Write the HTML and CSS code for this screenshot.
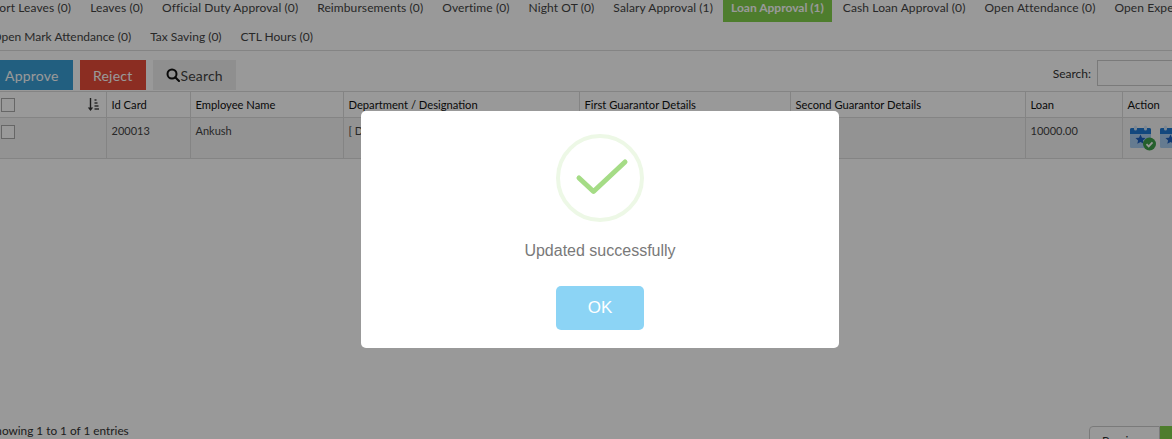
FILE: index.html
```html
<!DOCTYPE html>
<html lang="en">
	<head>
		<meta charset="UTF-8" />
		<meta name="viewport" content="width=device-width, initial-scale=1.0" />
		<title>Loan Approval</title>
		<link rel="stylesheet" href="styles.css">
	</head>
	<body>
		<div id="page">
			<ul class="tabs">
				<li class="first"><a>Short Leaves (0)</a></li>
				<li><a>Leaves (0)</a></li>
				<li><a>Official Duty Approval (0)</a></li>
				<li><a>Reimbursements (0)</a></li>
				<li><a>Overtime (0)</a></li>
				<li><a>Night OT (0)</a></li>
				<li><a>Salary Approval (1)</a></li>
				<li class="active"><a>Loan Approval (1)</a></li>
				<li><a>Cash Loan Approval (0)</a></li>
				<li><a>Open Attendance (0)</a></li>
				<li><a>Open Expense Approval (0)</a></li>
				<li class="second-row"><a>Open Mark Attendance (0)</a></li>
				<li class="second-row"><a>Tax Saving (0)</a></li>
				<li class="second-row"><a>CTL Hours (0)</a></li>
			</ul>

			<div class="toolbar">
				<button class="btn btn-approve">Approve</button>
				<button class="btn btn-reject">Reject</button>
				<button class="btn btn-search">
					<svg width="14" height="14" viewBox="0 0 14 14" fill="none" stroke="#111" stroke-width="2">
						<circle cx="6" cy="6" r="4.5" />
						<path d="M9.2 9.2 13 13" stroke-linecap="round" />
					</svg>Search
				</button>
				<label class="filter">Search: <input type="text" /></label>
			</div>

			<table class="grid">
				<colgroup>
					<col class="c-check" />
					<col class="c-id" />
					<col class="c-name" />
					<col class="c-dept" />
					<col class="c-first" />
					<col class="c-second" />
					<col class="c-loan" />
					<col class="c-action" />
				</colgroup>
				<thead>
					<tr>
						<th>
							<div class="check-head">
								<span class="box"></span>
								<svg width="12" height="13" viewBox="0 0 12 13">
									<path d="M2.800 0h1.400v9.500h2L3.500 13 .8 9.500h2z" fill="#333" />
									<g fill="#777">
										<rect x="7.500" y="1" width="2" height="2" />
										<rect x="7.500" y="4" width="3" height="2" />
										<rect x="7.500" y="7" width="4" height="2" />
										<rect x="7.500" y="10" width="4.500" height="2" />
									</g>
								</svg>
							</div>
						</th>
						<th>Id Card</th>
						<th>Employee Name</th>
						<th>Department / Designation</th>
						<th>First Guarantor Details</th>
						<th>Second Guarantor Details</th>
						<th>Loan</th>
						<th>Action</th>
					</tr>
				</thead>
				<tbody>
					<tr>
						<td><span class="box"></span></td>
						<td>200013</td>
						<td>Ankush</td>
						<td>[ D</td>
						<td></td>
						<td></td>
						<td>10000.00</td>
						<td>
							<div class="actions">
								<svg class="cal" width="26" height="26" viewBox="0 0 26 26">
									<rect x="0" y="3" width="21" height="20" rx="1.500" fill="#a9cdf0" />
									<path d="M0 4.500A1.500 1.500 0 0 1 1.500 3h18A1.500 1.500 0 0 1 21 4.500V9H0z" fill="#1e78d2" />
									<rect x="4" y="0.500" width="3" height="5" rx="1.500" fill="#cfe2f5" />
									<rect x="14" y="0.500" width="3" height="5" rx="1.500" fill="#cfe2f5" />
									<path d="M10.500 9.500l1.500 3.200 3.500.4-2.600 2.300.8 3.400-3.200-1.800-3.200 1.800.8-3.400-2.600-2.300 3.500-.4z" fill="#1a5fc0" />
									<circle cx="19.500" cy="19" r="6.500" fill="#3fa14a" />
									<path d="M16.500 19.200l2.200 2.200 3.800-4" fill="none" stroke="#fff" stroke-width="1.800" />
								</svg>
								<svg class="cal" width="26" height="26" viewBox="0 0 26 26">
									<rect x="0" y="3" width="21" height="20" rx="1.500" fill="#a9cdf0" />
									<path d="M0 4.500A1.500 1.500 0 0 1 1.500 3h18A1.500 1.500 0 0 1 21 4.500V9H0z" fill="#1e78d2" />
									<rect x="4" y="0.500" width="3" height="5" rx="1.500" fill="#cfe2f5" />
									<rect x="14" y="0.500" width="3" height="5" rx="1.500" fill="#cfe2f5" />
									<path d="M10.500 9.500l1.500 3.200 3.500.4-2.600 2.300.8 3.400-3.200-1.800-3.200 1.800.8-3.400-2.600-2.300 3.500-.4z" fill="#1a5fc0" />
								</svg>
							</div>
						</td>
					</tr>
				</tbody>
			</table>

			<div class="foot">
				<div class="info">Showing 1 to 1 of 1 entries</div>
				<div class="pager">
					<span class="prev">Previous</span>
					<span class="cur">1</span>
				</div>
			</div>
		</div>

		<div class="overlay">
			<div class="modal">
				<div class="tick">
					<svg width="88" height="88" viewBox="0 0 88 88" fill="none">
						<circle cx="44" cy="44" r="42" stroke="#edf8e6" stroke-width="4" />
						<path d="M23 44 37.500 57.500 69 28" stroke="#a5dc86" stroke-width="5" stroke-linecap="round" stroke-linejoin="round" />
					</svg>
				</div>
				<p class="msg">Updated successfully</p>
				<button class="ok">OK</button>
			</div>
		</div>
	</body>
</html>
```

FILE: styles.css
```css
html,
body {
	margin: 0;
	height: 100%;
	overflow: hidden;
}

body {
	background: #fff;
	font-family: Lato, "Open Sans", sans-serif;
	font-size: 12px;
	color: #333;
}

#page {
	display: flex;
	flex-direction: column;
	width: 1290px;
	height: 100%;
	margin-left: -8px;
}

.tabs {
	display: flex;
	flex-wrap: wrap;
	row-gap: 8px;
	list-style: none;
	margin: 0 0 0 -9px;
	padding: 0;
	border-bottom: 1px solid #ddd;
	letter-spacing: 0.1px;
}

.tabs li {
	height: 21px;
	margin-right: 1px;
}

.tabs .first {
	margin-left: -6px;
}

.tabs .second-row {
	letter-spacing: 0;
}

.tabs a {
	display: block;
	padding: 0 9px;
	line-height: 15px;
	color: #444;
}

.tabs .active {
	margin-right: 2px;
}

.tabs .active a {
	height: 22px;
	padding: 0 8px;
	background: #82d04b;
	color: #fff;
	font-weight: 700;
	letter-spacing: 0;
}

.toolbar {
	display: flex;
	align-items: flex-start;
	gap: 7px;
	margin-top: 9px;
	height: 31px;
}

.btn {
	height: 30px;
	padding: 0 13.5px;
	border: 0;
	font-family: inherit;
	font-size: 14px;
	letter-spacing: 0.2px;
	cursor: pointer;
}

.btn-approve {
	padding-left: 13px;
	padding-right: 14px;
	background: #3a9fd6;
	color: #fff;
}

.btn-reject {
	background: #e84c3a;
	color: #fff;
}

.btn-search {
	display: flex;
	align-items: center;
	background: #eee;
	color: #444;
}

.filter {
	display: flex;
	align-items: center;
	gap: 6px;
	margin-left: auto;
	margin-right: 8px;
	height: 26px;
}

.filter input {
	box-sizing: border-box;
	width: 177px;
	height: 26px;
	padding: 0;
	border: 1px solid #ccc;
	background: #fff;
}

.grid {
	table-layout: fixed;
	border-collapse: collapse;
	width: 1290px;
}

.c-check { width: 114px; }
.c-id { width: 84px; }
.c-name { width: 153px; }
.c-dept { width: 236px; }
.c-first { width: 211px; }
.c-second { width: 235px; }
.c-loan { width: 97px; }
.c-action { width: 160px; }

.grid th,
.grid td {
	border: 1px solid #ddd;
	padding: 0 5px;
	text-align: left;
	vertical-align: top;
	line-height: 25px;
}

.grid th {
	height: 24px;
	font-size: 11.2px;
	font-weight: 400;
	line-height: 25px;
	color: #111;
}

.grid td {
	height: 40px;
	font-size: 11px;
	background: #f5f5f5;
	color: #444;
}

.grid th:first-child,
.grid td:first-child {
	padding-left: 9px;
	border-left: 0;
}

.check-head {
	display: flex;
	align-items: center;
	justify-content: space-between;
	height: 25px;
	padding-right: 2px;
}

.box {
	display: inline-block;
	box-sizing: border-box;
	width: 14px;
	height: 14px;
	border: 1px solid #aaa;
	background: #fff;
	vertical-align: middle;
}

.actions {
	display: flex;
	gap: 4px;
	padding: 7px 0 0 2px;
}

.foot {
	display: flex;
	justify-content: space-between;
	align-items: flex-end;
	margin-top: auto;
}

.info {
	margin-left: -3px;
	font-size: 11.8px;
	line-height: 16px;
	color: #333;
}

.pager {
	display: flex;
	height: 13px;
	overflow: hidden;
	margin-right: 43px;
	width: 150px;
}

.prev {
	box-sizing: border-box;
	width: 71px;
	height: 30px;
	padding: 6px 0 0 12px;
	border: 1px solid #ccc;
	border-radius: 4px 0 0 4px;
}

.cur {
	box-sizing: border-box;
	width: 30px;
	height: 30px;
	padding: 14px 0 0 10px;
	background: #82d04b;
	color: #fff;
}

.overlay {
	position: fixed;
	inset: 0;
	box-sizing: border-box;
	display: flex;
	align-items: center;
	justify-content: center;
	padding: 20px 0 0 28px;
	background: rgba(0, 0, 0, 0.4);
}

.modal {
	box-sizing: border-box;
	display: flex;
	flex-direction: column;
	align-items: center;
	width: 478px;
	height: 237px;
	padding-top: 23px;
	background: #fff;
	border-radius: 5px;
}

.tick {
	height: 88px;
}

.msg {
	margin: 19px 0 0;
	font-family: "Liberation Sans", Arial, sans-serif;
	font-size: 16px;
	line-height: 20px;
	color: #797979;
}

.ok {
	width: 88px;
	height: 44px;
	margin-top: 25px;
	border: 0;
	border-radius: 5px;
	background: #8cd4f5;
	color: #fff;
	font-family: "Liberation Sans", Arial, sans-serif;
	font-size: 17px;
}
```
